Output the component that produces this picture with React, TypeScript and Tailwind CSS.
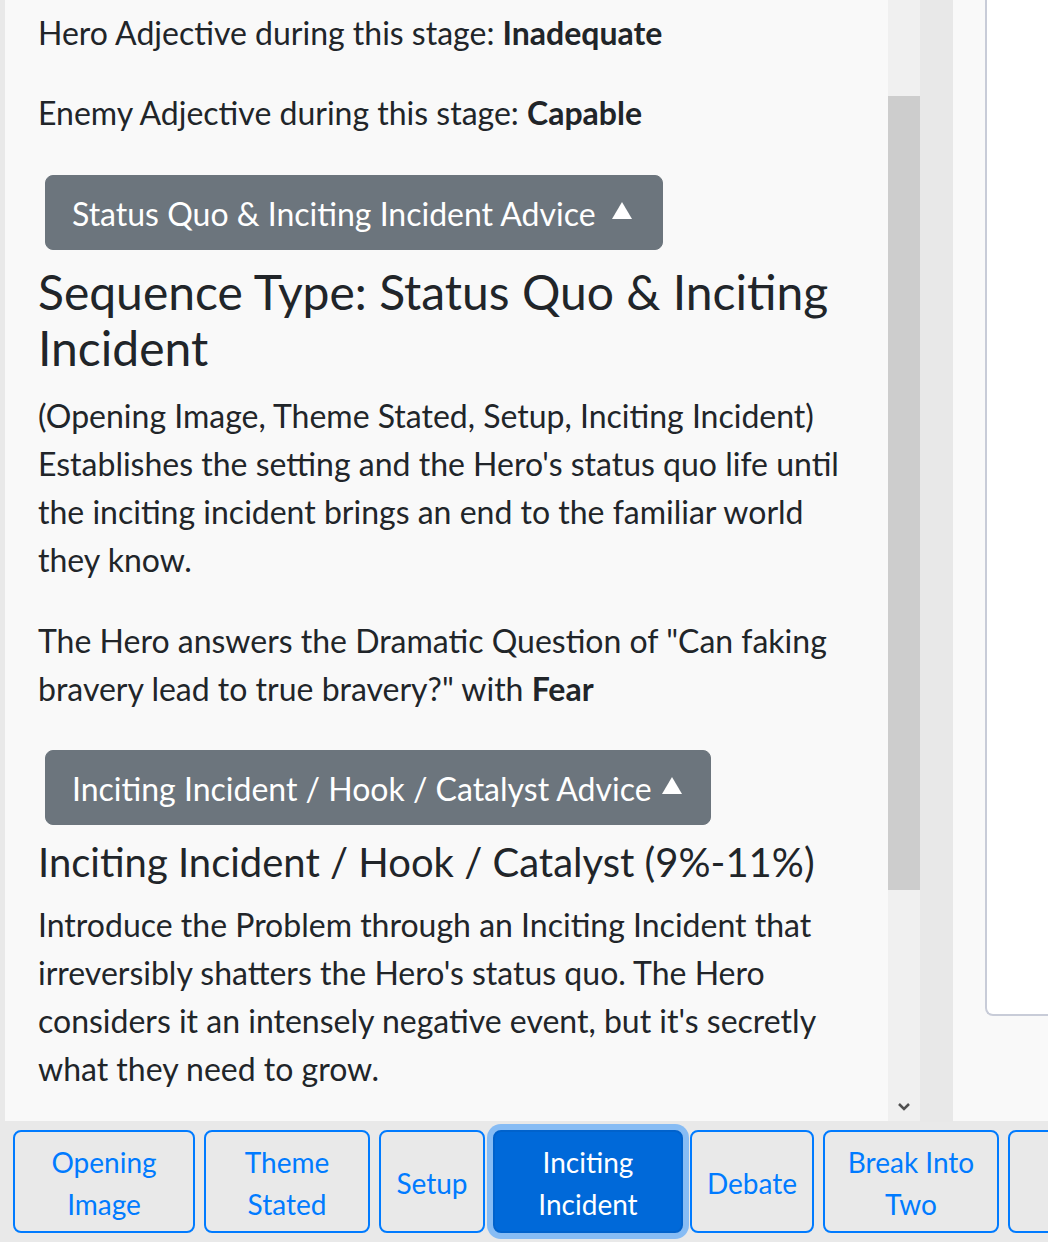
import React from "react";

function Triangle() {
  return (
    <svg width="20" height="17" viewBox="0 0 20 17" className="shrink-0">
      <polygon points="10,0 20,17 0,17" fill="#ffffff" />
    </svg>
  );
}

function AdviceButton({ label, width }: { label: string; width: string }) {
  return (
    <div className="ml-[7px]">
      <button
        className={`${width} h-[75px] flex items-center justify-between pl-[26px] pr-[30px] pt-[3px] bg-[#6c757d] border border-[#6c757d] rounded-[8px] text-white text-[32px] leading-[48px]`}
      >
        <span className="whitespace-nowrap">{label}</span>
        <span className="-mt-[8px] ml-[10px]">
          <Triangle />
        </span>
      </button>
    </div>
  );
}

type Beat = { label: React.ReactNode; w: string; active?: boolean };

const beats: Beat[] = [
  { label: <>Opening<br />Image</>, w: "w-[182px]" },
  { label: <>Theme<br />Stated</>, w: "w-[166px]" },
  { label: "Setup", w: "w-[106px]" },
  { label: <>Inciting<br />Incident</>, w: "w-[190px]", active: true },
  { label: "Debate", w: "w-[124px]" },
  { label: <>Break Into<br />Two</>, w: "w-[176px]" },
  { label: null, w: "w-[160px]" },
];

export default function App() {
  return (
    <div className="w-[1048px] h-[1251px] overflow-hidden bg-white font-['Lato',sans-serif] text-[#212529] flex flex-col">
      <div className="h-[1122px] shrink-0 flex bg-[#e9e9e9] pl-[5px]">
        {/* left scrolled panel */}
        <div className="w-[883px] h-[1121px] overflow-hidden bg-[#f9f9f9] px-[33px] pt-[9px] text-[32px] leading-[48px]">
          <p className="mb-[32px]">
            Hero Adjective during this stage: <b className="font-bold">Inadequate</b>
          </p>
          <p>
            Enemy Adjective during this stage: <b className="font-bold">Capable</b>
          </p>
          <div className="pt-[38px] pb-[14px]">
            <AdviceButton label="Status Quo & Inciting Incident Advice" width="w-[618px]" />
          </div>
          <h4 className="text-[48px] leading-[56px] font-normal mb-[16px]">
            Sequence Type: Status Quo &amp; Inciting Incident
          </h4>
          <p className="mb-[33px]">
            (Opening Image, Theme Stated, Setup, Inciting Incident)
            <br />
            Establishes the setting and the Hero's status quo life until the inciting incident brings an end to the familiar world they know.
          </p>
          <p>
            The Hero answers the Dramatic Question of "Can faking bravery lead to true bravery?" with{" "}
            <b className="font-bold">Fear</b>
          </p>
          <div className="pt-[37px] pb-[13px]">
            <AdviceButton label="Inciting Incident / Hook / Catalyst Advice" width="w-[666px]" />
          </div>
          <h5 className="text-[40px] leading-[48px] font-normal mb-[15px]">
            Inciting Incident / Hook / Catalyst (9%-11%)
          </h5>
          <p className="mb-[32px]">
            Introduce the Problem through an Inciting Incident that irreversibly shatters the Hero's status quo. The Hero considers it an intensely negative event, but it's secretly what they need to grow.
          </p>
        </div>

        {/* scrollbar */}
        <div className="w-[32px] h-[1121px] shrink-0 bg-[#f0f0f0] flex flex-col">
          <div className="h-[96px]" />
          <div className="h-[794px] bg-[#cdcdcd]" />
          <div className="flex-1 flex items-end justify-center pb-[10px]">
            <svg width="12" height="8" viewBox="0 0 12 8">
              <polyline points="1,1 6,6 11,1" fill="none" stroke="#505050" strokeWidth="2.5" />
            </svg>
          </div>
        </div>

        {/* gutter */}
        <div className="w-[33px] shrink-0 bg-[#e8e8e8]" />

        {/* right column */}
        <div className="flex-1 h-[1121px] bg-[#f9f9f9] pl-[32px]">
          <div className="h-[1016px] bg-white border-l-2 border-b-2 border-[#c8ccd8] rounded-bl-[8px]" />
        </div>
      </div>

      {/* bottom beat bar */}
      <div className="h-[120px] shrink-0 bg-[#e9e9e9] flex items-start gap-[9px] pl-[13px] pt-[8px] overflow-hidden">
        {beats.map((b, i) => (
          <button
            key={i}
            className={`${b.w} h-[103px] shrink-0 flex items-center justify-center text-center rounded-[8px] border-2 pt-[3px] text-[28px] leading-[42px] ${
              b.active
                ? "bg-[#0069d9] border-[#0062cc] text-white shadow-[0_0_0_6px_rgba(38,143,255,0.5)] -ml-[1px] -mr-[2px]"
                : "bg-transparent border-[#007bff] text-[#007bff]"
            }`}
          >
            {b.label && <span>{b.label}</span>}
          </button>
        ))}
      </div>
    </div>
  );
}
